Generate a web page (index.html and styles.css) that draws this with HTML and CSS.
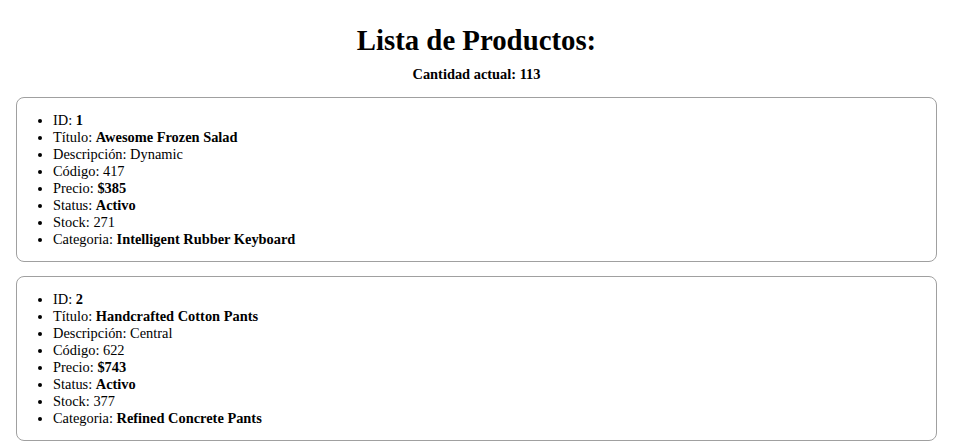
FILE: index.html
```html
<!DOCTYPE html>
<html lang="es">
<head>
<meta charset="utf-8">
<title>Lista de Productos</title>
<link rel="stylesheet" href="styles.css">
</head>
<body>
<header class="header">
  <h1 class="title">Lista de Productos:</h1>
  <p class="count">Cantidad actual: 113</p>
</header>
<main class="list">
  <section class="card">
    <ul class="fields">
      <li>ID: <b>1</b></li>
      <li>Título: <b>Awesome Frozen Salad</b></li>
      <li>Descripción: Dynamic</li>
      <li>Código: 417</li>
      <li>Precio: <b>$385</b></li>
      <li>Status: <b>Activo</b></li>
      <li>Stock: 271</li>
      <li>Categoria: <b>Intelligent Rubber Keyboard</b></li>
    </ul>
  </section>
  <section class="card">
    <ul class="fields">
      <li>ID: <b>2</b></li>
      <li>Título: <b>Handcrafted Cotton Pants</b></li>
      <li>Descripción: Central</li>
      <li>Código: 622</li>
      <li>Precio: <b>$743</b></li>
      <li>Status: <b>Activo</b></li>
      <li>Stock: 377</li>
      <li>Categoria: <b>Refined Concrete Pants</b></li>
    </ul>
  </section>
</main>
</body>
</html>
```

FILE: styles.css
```css
body {
  margin: 0;
  padding: 0 16px;
  font-family: "Liberation Serif", "Times New Roman", serif;
  color: #000;
  background: #fff;
}
.header {
  text-align: center;
  padding-top: 24px;
}
.title {
  margin: 0;
  font-size: 28.8px;
  line-height: 33px;
}
.count {
  margin: 9px 0 0;
  font-size: 14.4px;
  font-weight: bold;
  line-height: 16px;
}
.list {
  display: flex;
  flex-direction: column;
  gap: 14px;
  margin-top: 15px;
}
.card {
  border: 1px solid #a0a0a0;
  border-radius: 8px;
  padding: 14px 0 13px;
}
.fields {
  margin: 0;
  padding-left: 36px;
  font-size: 14.4px;
  line-height: 17px;
}
```
